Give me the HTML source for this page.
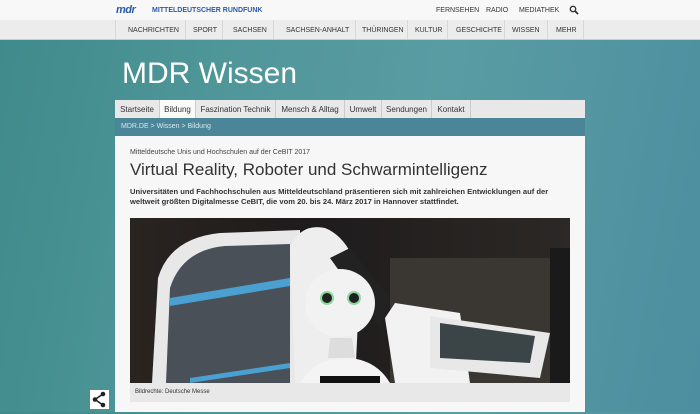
<!DOCTYPE html>
<html><head><meta charset="utf-8"><style>
*{margin:0;padding:0;box-sizing:border-box}
body{width:700px;height:412px;overflow:hidden;font-family:"Liberation Sans",sans-serif;background:linear-gradient(100deg,#3f8a8a 0%,#4f9699 30%,#5a9ca3 60%,#4d8ea0 100%);position:relative}
.top{position:absolute;left:0;top:0;width:700px;height:20px;background:#f8f8f8}
.logo{position:absolute;left:116px;top:4px;font:bold italic 11px "Liberation Sans",sans-serif;color:#2a5ba8;letter-spacing:-0.5px}
.brand{position:absolute;left:152px;top:7px;font-size:7px;font-weight:bold;color:#2a5ba8}
.tl{position:absolute;top:7px;font-size:7px;color:#333}
.nav{position:absolute;left:0;top:20px;width:700px;height:20px;background:#ececec;border-bottom:1px solid #ccc}
.nav span{position:absolute;top:7px;font-size:7px;color:#333}
.nav i{position:absolute;top:0;width:1px;height:19px;background:#d8d8d8}
h1{position:absolute;left:122px;top:57px;font-weight:normal;font-size:30px;color:#fff}
.sub{position:absolute;left:115px;top:100px;width:470px;height:18px;background:#e8e8e8}
.sub span{position:absolute;top:0;font-size:8px;color:#333;padding-top:5px;text-align:center;border-right:1px solid #ccc;height:18px}
.sub span.a{background:#fafafa}
.bc{position:absolute;left:115px;top:118px;width:470px;height:18px;background:#4a8697;color:#d8e8ee;font-size:7px;padding:5px 6px}
.content{position:absolute;left:115px;top:136px;width:470px;height:276px;background:#f7f7f7}
.kick{position:absolute;left:15px;top:13px;font-size:7px;color:#444}
.h2{position:absolute;left:15px;top:24px;font-size:17px;color:#333}
.lead{position:absolute;left:15px;top:51px;width:445px;font-size:7.6px;font-weight:bold;color:#333;line-height:10px}
.img{position:absolute;left:15px;top:82px;width:440px;height:165px;background:linear-gradient(90deg,#2a2420 0%,#1d1b1c 40%,#252220 70%,#2b2826 100%);overflow:hidden}
.cap{position:absolute;left:15px;top:247px;width:440px;height:19px;background:#e8e8e8;font-size:6px;color:#333;padding:6px 5px}
.share{position:absolute;left:90px;top:390px;width:19px;height:19px;background:#fff}
</style></head><body>
<div class="top"></div>
<div class="logo">mdr</div>
<div class="brand">MITTELDEUTSCHER RUNDFUNK</div>
<span class="tl" style="left:436px">FERNSEHEN</span>
<span class="tl" style="left:486px">RADIO</span>
<span class="tl" style="left:519px">MEDIATHEK</span>
<svg style="position:absolute;left:569px;top:5px" width="10" height="10"><circle cx="4" cy="4" r="2.7" fill="none" stroke="#333" stroke-width="1.4"/><path d="M6 6 9 9" stroke="#333" stroke-width="1.8"/></svg>
<div class="nav">
<i style="left:115px"></i><span style="left:128px">NACHRICHTEN</span><i style="left:185px"></i><span style="left:193px">SPORT</span><i style="left:222px"></i><span style="left:233px">SACHSEN</span><i style="left:273px"></i><span style="left:286px">SACHSEN-ANHALT</span><i style="left:355px"></i><span style="left:362px">THÜRINGEN</span><i style="left:407px"></i><span style="left:415px">KULTUR</span><i style="left:447px"></i><span style="left:456px">GESCHICHTE</span><i style="left:504px"></i><span style="left:512px">WISSEN</span><i style="left:547px"></i><span style="left:556px">MEHR</span><i style="left:583px"></i>
</div>
<h1>MDR Wissen</h1>
<div class="sub"><span style="left:0;width:45px">Startseite</span><span class="a" style="left:45px;width:36px">Bildung</span><span style="left:81px;width:80px">Faszination Technik</span><span style="left:161px;width:69px">Mensch &amp; Alltag</span><span style="left:230px;width:37px">Umwelt</span><span style="left:267px;width:50px">Sendungen</span><span style="left:317px;width:39px">Kontakt</span></div>
<div class="bc">MDR.DE &gt; Wissen &gt; Bildung</div>
<div class="content">
<div class="kick">Mitteldeutsche Unis und Hochschulen auf der CeBIT 2017</div>
<div class="h2">Virtual Reality, Roboter und Schwarmintelligenz</div>
<div class="lead">Universitäten und Fachhochschulen aus Mitteldeutschland präsentieren sich mit zahlreichen Entwicklungen auf der weltweit größten Digitalmesse CeBIT, die vom 20. bis 24. März 2017 in Hannover stattfindet.</div>
<div class="img">
<svg width="440" height="165" viewBox="0 0 440 165">
<rect x="260" y="40" width="180" height="125" fill="#3a3632"/>
<rect x="420" y="30" width="20" height="135" fill="#1a1a1a"/>
<path d="M22 165 L28 60 Q40 20 90 15 L170 12 L170 165Z" fill="#e8e8e8"/>
<path d="M36 165 L40 70 Q52 32 95 28 L160 26 L160 165Z" fill="#4a5058"/>
<path d="M40 80 L160 60 L160 68 L40 88Z" fill="#4aa0d0"/>
<path d="M60 160 L160 145 L160 150 L60 165Z" fill="#4aa0d0"/>
<path d="M165 165 L160 30 Q170 5 195 10 Q220 20 230 60 L225 165Z" fill="#eeeeee"/>
<path d="M200 40 L220 30 L260 80 L250 110Z" fill="#222"/>
<path d="M265 165 L255 100 L265 85 L330 95 L340 165Z" fill="#f2f2f2"/>
<path d="M300 98 L420 115 L410 160 L300 150Z" fill="#e8e8e8"/>
<path d="M310 105 L405 118 L400 145 L310 140Z" fill="#3b4548"/>
<ellipse cx="210" cy="85" rx="35" ry="34" fill="#f2f2f2"/>
<circle cx="197" cy="80" r="7" fill="#8fd8a0"/><circle cx="197" cy="80" r="5" fill="#222"/>
<circle cx="224" cy="80" r="7" fill="#8fd8a0"/><circle cx="224" cy="80" r="5" fill="#222"/>
<path d="M200 120 L222 120 L225 140 L198 140Z" fill="#ddd"/>
<path d="M170 165 Q185 140 215 140 Q245 140 260 165Z" fill="#f4f4f4"/>
<rect x="190" y="158" width="60" height="7" fill="#111"/>
</svg>
</div>
<div class="cap">Bildrechte: Deutsche Messe</div>
</div>
<div class="share"><svg width="19" height="19"><path d="M13 4 5 9.5 13 15" fill="none" stroke="#222" stroke-width="1.6"/><circle cx="13" cy="4" r="2.3" fill="#222"/><circle cx="5" cy="9.5" r="2.3" fill="#222"/><circle cx="13" cy="15" r="2.3" fill="#222"/></svg></div>
</body></html>
